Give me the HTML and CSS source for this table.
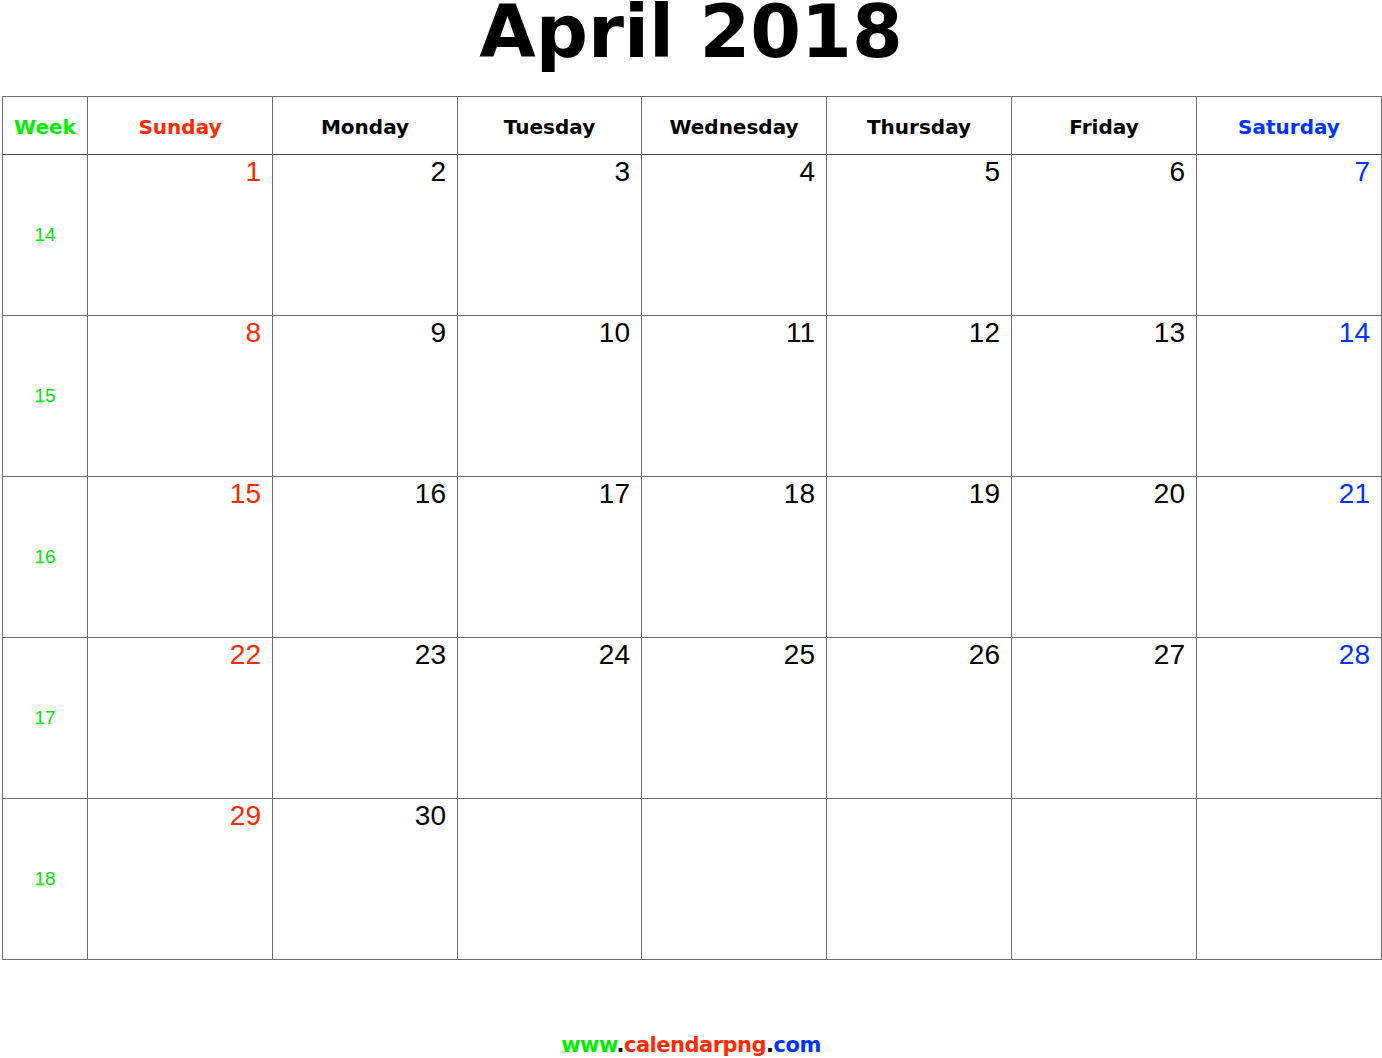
FILE: index.html
```html
<!DOCTYPE html>
<html lang="en">
<head>
<meta charset="utf-8">
<title>April 2018</title>
<link rel="stylesheet" href="styles.css">
</head>
<body>
<h1 class="title">April 2018</h1>
<div class="calendar">
  <div class="head week">Week</div>
  <div class="head sun">Sunday</div>
  <div class="head">Monday</div>
  <div class="head">Tuesday</div>
  <div class="head">Wednesday</div>
  <div class="head">Thursday</div>
  <div class="head">Friday</div>
  <div class="head sat">Saturday</div>

  <div class="wk">14</div>
  <div class="day sun">1</div>
  <div class="day">2</div>
  <div class="day">3</div>
  <div class="day">4</div>
  <div class="day">5</div>
  <div class="day">6</div>
  <div class="day sat">7</div>

  <div class="wk">15</div>
  <div class="day sun">8</div>
  <div class="day">9</div>
  <div class="day">10</div>
  <div class="day">11</div>
  <div class="day">12</div>
  <div class="day">13</div>
  <div class="day sat">14</div>

  <div class="wk">16</div>
  <div class="day sun">15</div>
  <div class="day">16</div>
  <div class="day">17</div>
  <div class="day">18</div>
  <div class="day">19</div>
  <div class="day">20</div>
  <div class="day sat">21</div>

  <div class="wk">17</div>
  <div class="day sun">22</div>
  <div class="day">23</div>
  <div class="day">24</div>
  <div class="day">25</div>
  <div class="day">26</div>
  <div class="day">27</div>
  <div class="day sat">28</div>

  <div class="wk">18</div>
  <div class="day sun">29</div>
  <div class="day">30</div>
  <div class="day"></div>
  <div class="day"></div>
  <div class="day"></div>
  <div class="day"></div>
  <div class="day"></div>
</div>
<div class="footer"><span class="f-green">www</span><span class="f-black">.</span><span class="f-red">calendarpng</span><span class="f-black">.</span><span class="f-blue">com</span></div>
</body>
</html>
```

FILE: styles.css
```css
html, body {
  margin: 0;
  padding: 0;
  background: #ffffff;
}

body {
  width: 1382px;
  font-family: "DejaVu Sans", Verdana, sans-serif;
  color: #000000;
}

.title {
  margin: 0;
  height: 96px;
  font-family: "DejaVu Sans", Verdana, sans-serif;
  font-weight: bold;
  font-size: 73px;
  line-height: 64px;
  text-align: center;
  color: #000000;
}

.calendar {
  margin-left: 2px;
  width: 1380px;
  box-sizing: border-box;
  display: grid;
  grid-template-columns: 85px 185px 185px 184px 185px 185px 185px 185px;
  grid-template-rows: 58px repeat(5, 161px);
  border-left: 1px solid #6e6e6e;
  border-top: 1px solid #6e6e6e;
}

.calendar > div {
  box-sizing: border-box;
  border-right: 1px solid #6e6e6e;
  border-bottom: 1px solid #6e6e6e;
}

.head {
  display: flex;
  align-items: center;
  justify-content: center;
  padding-top: 3px;
  font-family: "DejaVu Sans", Verdana, sans-serif;
  font-weight: bold;
  font-size: 20px;
  color: #000000;
}

.calendar > .head {
  border-bottom-color: #4a4a4a;
}

.head.week {
  color: #00ee00;
}

.wk {
  display: flex;
  align-items: center;
  justify-content: center;
  font-family: "Liberation Sans", Arial, sans-serif;
  font-size: 19px;
  color: #00e600;
}

.day {
  padding: 3px 11px 0 0;
  text-align: right;
  font-family: "Liberation Sans", Arial, sans-serif;
  font-size: 28px;
  line-height: 28px;
  color: #000000;
}

.sun {
  color: #ff2a00;
}

.sat {
  color: #0033ff;
}

.head.sun {
  color: #ff2a00;
}

.head.sat {
  color: #0033ff;
}

.footer {
  margin-top: 73px;
  text-align: center;
  font-family: "DejaVu Sans", Verdana, sans-serif;
  font-weight: bold;
  font-size: 21px;
  letter-spacing: -0.5px;
  line-height: 24px;
}

.f-green {
  color: #00ee00;
}

.f-black {
  color: #000000;
}

.f-red {
  color: #ff2a00;
}

.f-blue {
  color: #0033ff;
}
```
